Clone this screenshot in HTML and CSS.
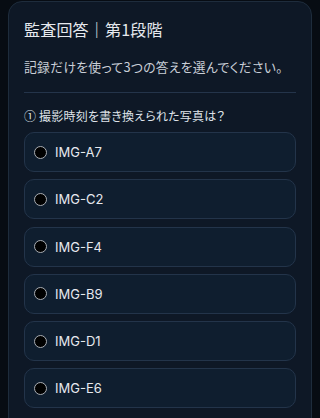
FILE: index.html
```html
<!DOCTYPE html>
<html lang="ja">
<head>
<meta charset="UTF-8">
<meta name="viewport" content="width=device-width, initial-scale=1.0">
<title>監査回答</title>
<link rel="stylesheet" href="styles.css">
</head>
<body>
<div class="card">
    <h1 class="title">監査回答｜第1段階</h1>
    <p class="lead">記録だけを使って3つの答えを選んでください。</p>
    <div class="divider"></div>
    <p class="question">① 撮影時刻を書き換えられた写真は？</p>
    <div class="options">
        <label class="option"><span class="radio"></span>IMG-A7</label>
        <label class="option"><span class="radio"></span>IMG-C2</label>
        <label class="option"><span class="radio"></span>IMG-F4</label>
        <label class="option"><span class="radio"></span>IMG-B9</label>
        <label class="option"><span class="radio"></span>IMG-D1</label>
        <label class="option"><span class="radio"></span>IMG-E6</label>
    </div>
</div>
</body>
</html>
```

FILE: styles.css
```css
body {
    margin: 0;
    padding: 1px 8px 0 8px;
    background-color: #070c13;
    font-family: "Noto Sans CJK JP", sans-serif;
    color: #e6e9ee;
    height: 417px;
    overflow: hidden;
}

.card {
    background-color: #0e1826;
    border: 1px solid #1e2c3c;
    border-radius: 14px;
    padding: 15px 15px 20px 15px;
    min-height: 440px;
}

.title {
    margin: 0;
    font-size: 16px;
    font-weight: 400;
    line-height: 24px;
    font-feature-settings: "palt";
    letter-spacing: 0.2px;
}

.lead {
    margin: 16px 0 0 0;
    font-size: 12.8px;
    line-height: 20px;
    color: #c9ced6;
    font-feature-settings: "palt";
    letter-spacing: 0.3px;
    white-space: nowrap;
}

.divider {
    height: 1px;
    background-color: #24344a;
    margin: 15px 0 0 0;
}

.question {
    margin: 13px 0 0 0;
    font-size: 12px;
    line-height: 20px;
    color: #dfe3e9;
    font-feature-settings: "palt";
    letter-spacing: 0.2px;
}

.options {
    display: flex;
    flex-direction: column;
    gap: 7.3px;
    margin-top: 6px;
}

.option {
    display: flex;
    align-items: center;
    height: 38px;
    padding: 0 9px;
    border: 1px solid #23344a;
    border-radius: 10px;
    background-color: #0f1e2f;
    font-family: Inter, "Noto Sans CJK JP", sans-serif;
    font-size: 13px;
    color: #e6e9ee;
}

.radio {
    width: 11px;
    height: 11px;
    border: 1.5px solid #a9adb3;
    border-radius: 50%;
    background-color: #000;
    margin-right: 8px;
}
```
